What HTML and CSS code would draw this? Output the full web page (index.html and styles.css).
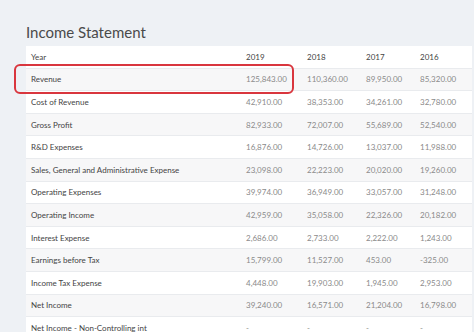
FILE: index.html
```html
<!DOCTYPE html>
<html lang="en">
<head>
    <meta charset="utf-8">
    <title>Income Statement</title>
    <link rel="stylesheet" href="styles.css">
</head>
<body>
    <main class="page">
        <h1 class="titel">Income Statement</h1>
        <section class="panel">
            <div class="markering"></div>
            <table class="tabel">
                <tr class="hoved">
                    <td>Year</td><td>2019</td><td>2018</td><td>2017</td><td>2016</td>
                </tr>
                <tr>
                    <td>Revenue</td><td>125,843.00</td><td>110,360.00</td><td>89,950.00</td><td>85,320.00</td>
                </tr>
                <tr>
                    <td>Cost of Revenue</td><td>42,910.00</td><td>38,353.00</td><td>34,261.00</td><td>32,780.00</td>
                </tr>
                <tr>
                    <td>Gross Profit</td><td>82,933.00</td><td>72,007.00</td><td>55,689.00</td><td>52,540.00</td>
                </tr>
                <tr>
                    <td>R&amp;D Expenses</td><td>16,876.00</td><td>14,726.00</td><td>13,037.00</td><td>11,988.00</td>
                </tr>
                <tr>
                    <td>Sales, General and Administrative Expense</td><td>23,098.00</td><td>22,223.00</td><td>20,020.00</td><td>19,260.00</td>
                </tr>
                <tr>
                    <td>Operating Expenses</td><td>39,974.00</td><td>36,949.00</td><td>33,057.00</td><td>31,248.00</td>
                </tr>
                <tr>
                    <td>Operating Income</td><td>42,959.00</td><td>35,058.00</td><td>22,326.00</td><td>20,182.00</td>
                </tr>
                <tr>
                    <td>Interest Expense</td><td>2,686.00</td><td>2,733.00</td><td>2,222.00</td><td>1,243.00</td>
                </tr>
                <tr>
                    <td>Earnings before Tax</td><td>15,799.00</td><td>11,527.00</td><td>453.00</td><td>-325.00</td>
                </tr>
                <tr>
                    <td>Income Tax Expense</td><td>4,448.00</td><td>19,903.00</td><td>1,945.00</td><td>2,953.00</td>
                </tr>
                <tr>
                    <td>Net Income</td><td>39,240.00</td><td>16,571.00</td><td>21,204.00</td><td>16,798.00</td>
                </tr>
                <tr>
                    <td>Net Income - Non-Controlling int</td><td>-</td><td>-</td><td>-</td><td>-</td>
                </tr>
            </table>
        </section>
    </main>
</body>
</html>
```

FILE: styles.css
```css
body {
    margin: 0;
    background-color: #eef1f5;
    font-family: 'Lato', 'Liberation Sans', sans-serif;
    overflow: hidden;
}

.page {
    padding: 21px 2px 0 26px;
}

.titel {
    margin: 0;
    height: 25px;
    font-size: 15px;
    font-weight: normal;
    color: #4a4a4a;
    line-height: 22px;
}

.panel {
    position: relative;
    background-color: #fff;
}

.tabel {
    width: 100%;
    border-collapse: collapse;
    table-layout: fixed;
    font-size: 8px;
}

.tabel td {
    height: 21.6px;
    padding: 0 0 0 5px;
    border-top: 1px solid #e9ebee;
    color: #8a8a8a;
    white-space: nowrap;
}

.tabel td:nth-child(1) {
    width: 210px;
    color: #444;
}

.tabel td:nth-child(2) {
    width: 56px;
}

.tabel td:nth-child(3) {
    width: 54px;
}

.tabel td:nth-child(4) {
    width: 49px;
}

.tabel tr:nth-child(even) td {
    background-color: #f7f7f8;
}

.tabel .hoved td {
    border-top: none;
    color: #444;
}

/* rød ramme om Revenue */
.markering {
    position: absolute;
    left: -12px;
    top: 18px;
    width: 276px;
    height: 26px;
    border: 2px solid #d9363e;
    border-radius: 6px;
    z-index: 2;
}
```
